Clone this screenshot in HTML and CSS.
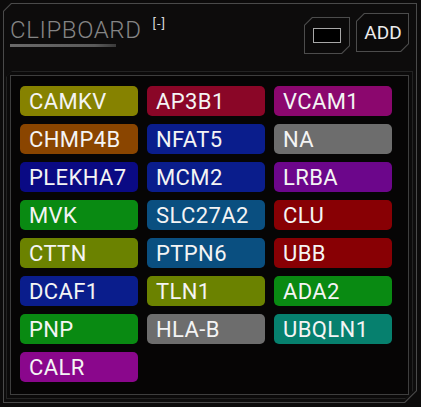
FILE: index.html
```html
<!DOCTYPE html>
<html>
<head>
<meta charset="utf-8">
<link rel="stylesheet" href="styles.css">
</head>
<body>
<div class="panel">
  <div class="header">
    <div class="title-wrap">
      <div class="title">CLIPBOARD</div>
      <div class="title-line"></div>
    </div>
    <div class="toggle">[-]</div>
    <div class="actions">
      <div class="btn btn-square"><span class="swatch"></span></div>
      <div class="btn btn-add"><span class="btn-label">ADD</span></div>
    </div>
  </div>
  <div class="list">
    <div class="chip c-olive">CAMKV</div>
    <div class="chip c-crimson">AP3B1</div>
    <div class="chip c-magenta">VCAM1</div>
    <div class="chip c-brown">CHMP4B</div>
    <div class="chip c-blue">NFAT5</div>
    <div class="chip c-gray">NA</div>
    <div class="chip c-navy">PLEKHA7</div>
    <div class="chip c-blue">MCM2</div>
    <div class="chip c-purple">LRBA</div>
    <div class="chip c-green">MVK</div>
    <div class="chip c-steel">SLC27A2</div>
    <div class="chip c-red">CLU</div>
    <div class="chip c-lime">CTTN</div>
    <div class="chip c-steel">PTPN6</div>
    <div class="chip c-red">UBB</div>
    <div class="chip c-blue">DCAF1</div>
    <div class="chip c-lime">TLN1</div>
    <div class="chip c-green">ADA2</div>
    <div class="chip c-green">PNP</div>
    <div class="chip c-gray">HLA-B</div>
    <div class="chip c-teal">UBQLN1</div>
    <div class="chip c-violet">CALR</div>
  </div>
</div>
</body>
</html>
```
FILE: styles.css
```css
html, body {
  margin: 0;
  padding: 0;
  background: #0c0b0b;
  width: 421px;
  height: 407px;
  overflow: hidden;
  font-family: Roboto, "Liberation Sans", sans-serif;
}

.panel {
  position: relative;
  margin: 3px 0 0 3px;
  width: 414px;
  height: 400px;
  box-sizing: border-box;
  padding: 1px;
  background: #4a4a4a;
  clip-path: polygon(8px 0, 100% 0, 100% calc(100% - 12px), calc(100% - 12px) 100%, 0 100%, 0 8px);
}

.panel::before {
  content: "";
  position: absolute;
  inset: 1px;
  background: #0d0c0c;
  clip-path: polygon(7.6px 0, 100% 0, 100% calc(100% - 11.6px), calc(100% - 11.6px) 100%, 0 100%, 0 7.6px);
  z-index: 0;
}

.header {
  position: relative;
  z-index: 1;
  display: flex;
  align-items: flex-start;
  height: 72px;
  padding-left: 6px;
}

.title-wrap {
  display: flex;
  flex-direction: column;
  padding-top: 13px;
}

.title {
  font-family: Roboto, sans-serif;
  font-weight: 300;
  font-size: 24px;
  line-height: 26px;
  color: #858585;
  letter-spacing: 0.6px;
}

.title-line {
  margin-top: 1px;
  width: 106px;
  height: 3px;
  background: linear-gradient(to right, #6a6a6a 0%, #5a5a5a 80%, #3a3a3a 100%);
}

.toggle {
  margin-left: 11px;
  margin-top: 13px;
  font-size: 13px;
  line-height: 14px;
  color: #d8d8d8;
  letter-spacing: 1px;
}

.actions {
  margin-left: auto;
  margin-right: 7px;
  display: flex;
  gap: 6px;
  align-items: flex-start;
}

.btn {
  position: relative;
  box-sizing: border-box;
  background: #4c4c4c;
  clip-path: polygon(8px 0, 100% 0, 100% calc(100% - 8px), calc(100% - 8px) 100%, 0 100%, 0 8px);
  display: flex;
  align-items: center;
  justify-content: center;
  color: #ececec;
}

.btn::before {
  content: "";
  position: absolute;
  inset: 1px;
  background: #0b0a0a;
  clip-path: polygon(7.6px 0, 100% 0, 100% calc(100% - 7.6px), calc(100% - 7.6px) 100%, 0 100%, 0 7.6px);
}

.btn-square {
  margin-top: 13px;
  width: 46px;
  height: 37px;
}

.swatch {
  position: relative;
  width: 26px;
  height: 13px;
  border: 1px solid #a8a8a8;
  background: #000;
}

.btn-add {
  margin-top: 9px;
  width: 53px;
  height: 39px;
}

.btn-label {
  position: relative;
  font-size: 19px;
  line-height: 20px;
  padding-left: 1px;
}

.list {
  position: relative;
  z-index: 1;
  margin: 0 8px 0 7px;
  height: 318px;
  box-sizing: border-box;
  padding: 10px 0 0 9px;
  display: grid;
  grid-template-columns: repeat(3, 118px);
  grid-auto-rows: 30px;
  column-gap: 9px;
  row-gap: 8px;
  align-content: start;
  background: #060505;
  outline: 1px solid #3e3e3e;
  box-shadow: 0 0 0 4px #0b0a0a, 0 0 0 5px #232323;
  clip-path: polygon(-6px 2px, 2px -6px, calc(100% + 6px) -6px, calc(100% + 6px) calc(100% - 4px), calc(100% - 4px) calc(100% + 6px), -6px calc(100% + 6px));
}

.chip {
  border-radius: 5px;
  color: #f4f4f4;
  font-size: 22px;
  letter-spacing: 0.4px;
  line-height: 31px;
  padding-left: 9px;
  white-space: nowrap;
  overflow: hidden;
}

.c-olive { background: #868200; }
.c-crimson { background: #8a0627; }
.c-magenta { background: #8b076e; }
.c-brown { background: #8a4500; }
.c-blue { background: #0a1d8c; }
.c-gray { background: #6d6d6d; }
.c-navy { background: #0a0a84; }
.c-purple { background: #6c068b; }
.c-green { background: #098a12; }
.c-steel { background: #0a4f80; }
.c-red { background: #880004; }
.c-lime { background: #6b8200; }
.c-teal { background: #06806e; }
.c-violet { background: #8a078c; }
```
